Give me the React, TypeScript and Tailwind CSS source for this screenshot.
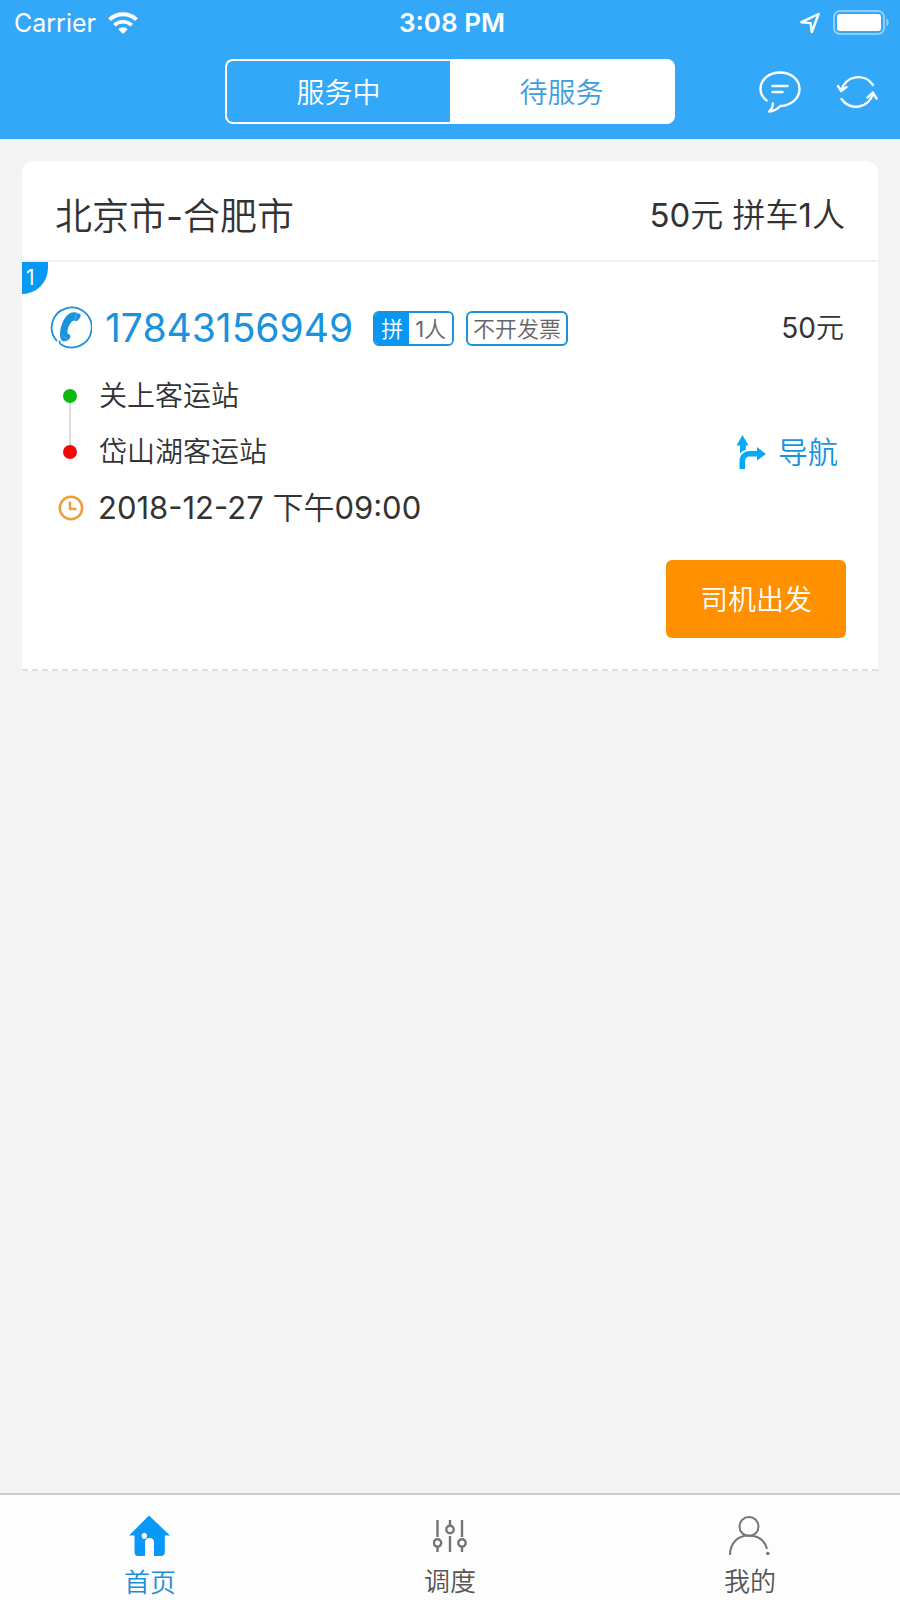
import { useState } from 'react';
import type { ReactNode } from 'react';

function WifiIcon() {
  return (
    <svg viewBox="0 0 30 22" className="h-[22px] w-[30px]" fill="none" stroke="currentColor" strokeWidth="4">
      <path d="M1.5 7.6a19.5 19.5 0 0 1 27 0" />
      <path d="M6.3 13.2a12.7 12.7 0 0 1 17.4 0" strokeWidth="3.6" />
      <path d="M15 22l-4.7-4.8a6.8 6.8 0 0 1 9.4 0z" fill="currentColor" stroke="none" />
    </svg>
  );
}

function LocationIcon() {
  return (
    <svg viewBox="0 0 20 22" className="h-[22px] w-[20px]" fill="none" stroke="currentColor" strokeWidth="2.4" strokeLinejoin="round">
      <path d="M18.600 2L1.400 10.200l9.200.9 1.200 8.900z" />
    </svg>
  );
}

function BatteryIcon() {
  return (
    <svg viewBox="0 0 57 26" className="h-[26px] w-[57px]">
      <rect x="1" y="1" width="50" height="23" rx="6" fill="none" stroke="#fff" strokeOpacity="0.45" strokeWidth="2" />
      <rect x="4" y="4" width="44" height="17" rx="3" fill="#fff" />
      <path d="M53.5 8.5c3 1.5 3 6.5 0 8z" fill="#fff" fillOpacity="0.5" />
    </svg>
  );
}

function MessageIcon() {
  return (
    <svg viewBox="0 0 42 42" className="h-[42px] w-[42px]" fill="none" stroke="currentColor" strokeWidth="2.4" strokeLinecap="round" strokeLinejoin="round">
      <path d="M7.600 29.500C3.800 26.600 1.500 22.800 1.500 18 1.500 8.500 10 1.500 21 1.500S40.500 8.500 40.500 18 32 34.500 21.500 35c-2.500 2.500-6 5.300-11.500 5.500 2.500-1.800 3.800-4.500 3.800-8" />
      <path d="M13.500 15h15M13.500 21h10" />
    </svg>
  );
}

function RefreshIcon() {
  return (
    <svg viewBox="0 0 42 38" className="h-[38px] w-[42px]" fill="none" stroke="currentColor" strokeWidth="2.4" strokeLinecap="round" strokeLinejoin="round">
      <path d="M37 12A17.500 17.500 0 0 0 5.500 17" />
      <path d="M2 13l3.200 5 5.300-4" />
      <path d="M5.500 26A17.500 17.500 0 0 0 37 20.500" />
      <path d="M31.500 24.500l5.300-5 3.700 6" />
    </svg>
  );
}

function PhoneIcon() {
  return (
    <svg viewBox="0 0 42 44" className="h-[44px] w-[42px]">
      <path
        d="M6.500 34.500A20 20 0 1 1 11 38.400Q9.500 37 9.600 35.500"
        fill="none"
        stroke="currentColor"
        strokeWidth="1.8"
        strokeLinecap="round"
      />
      <path
        d="M21.500 6.500C15 8.500 10.300 19 10 28c0 4 1.200 7.200 3.500 7.300 2.500.2 5.300-1 6.500-3.300l.5-2.500-3-2.300c-.5-4 1-8.200 4.500-12l2-.7 3 .8 3.500-4.300V8.300L25.500 6.300z"
        fill="currentColor"
      />
      <path d="M26.500 7l-1.700 7.500M12.500 29.200l5.500 4.800" stroke="#fff" strokeOpacity="0.4" strokeWidth="0.8" />
    </svg>
  );
}

function ClockIcon() {
  return (
    <svg viewBox="0 0 26 26" className="h-[26px] w-[26px]" fill="none" stroke="currentColor" strokeWidth="2.6">
      <circle cx="13" cy="13" r="11.2" />
      <path d="M12 6.500V14h6.500" />
    </svg>
  );
}

function NavigateIcon() {
  return (
    <svg viewBox="0 0 30 34" className="h-[34px] w-[30px]" fill="currentColor">
      <path d="M6.500 0l6 10.500H9.800v4.300C7 15.500 5 17 4 19v-8.500H.5z" />
      <path d="M3.500 34v-7c0-7 4-11 10.500-11h7v-4L30 19l-9 6.500v-4h-7c-3.500 0-5 2-5 5.500v7z" />
    </svg>
  );
}

function HomeIcon() {
  return (
    <svg viewBox="0 0 42 42" className="h-[42px] w-[42px]" fill="currentColor" fillRule="evenodd">
      <path d="M20 .5L41 20.500h-5.200V37q0 4-4 4H25V27.500q0-4.500-4.500-4.500T16 27.500V41h-7q-3.500 0-3.500-4V20.500H0zM15.300 17.700a2.600 3.200 0 1 0 .01 0z" />
    </svg>
  );
}

function SlidersIcon() {
  return (
    <svg viewBox="0 0 34 34" className="h-[34px] w-[34px]" fill="none" stroke="currentColor" strokeWidth="2.4">
      <path d="M4.500 1v17M4.500 28v5M17 1v5M17 17v16M29 1v17M29 28v5" />
      <circle cx="4.500" cy="24" r="3.700" />
      <circle cx="17" cy="10.500" r="3.700" />
      <circle cx="29" cy="24" r="3.700" />
    </svg>
  );
}

function UserIcon() {
  return (
    <svg viewBox="0 0 42 40" className="h-[40px] w-[42px]" fill="none" stroke="currentColor" strokeWidth="2">
      <circle cx="20" cy="10.500" r="9.500" />
      <path d="M1 39C1 27 9 19.500 19.500 19.500c9 0 16 4.500 18.500 13.500" />
      <circle cx="38.800" cy="37.500" r="1.800" fill="currentColor" stroke="none" />
    </svg>
  );
}

interface TabButtonProps {
  icon: ReactNode;
  label: string;
  active: boolean;
  onClick: () => void;
}

function TabButton({ icon, label, active, onClick }: TabButtonProps) {
  return (
    <button
      onClick={onClick}
      className={`flex flex-1 flex-col items-center pt-5 ${active ? 'text-[#0898f5]' : 'text-[#757575]'}`}
    >
      <span className="flex h-[44px] items-center">{icon}</span>
      <span className={`mt-2 text-[26px] leading-[36px] ${active ? 'text-[#1a8fda]' : 'text-[#555]'}`}>{label}</span>
    </button>
  );
}

function OrderCard() {
  return (
    <section className="rounded-t-xl border-b-2 border-dashed border-[#dedede] bg-white text-[#333]">
      <div className="flex h-[101px] items-center justify-between border-b-2 border-[#f0f0f0] px-[33px]">
        <h1 className="pt-3 text-[37px] leading-[48px]">北京市-合肥市</h1>
        <p className="pt-2 text-[33px] leading-[48px]">50元 拼车1人</p>
      </div>

      <div className="relative pt-[42px] pr-8 pb-[31px] pl-7">
        <span className="absolute top-0 left-0 flex h-8 w-[26px] items-center rounded-br-[26px] bg-[#0798f4] pl-1 text-[21px] leading-8 text-white">
          1
        </span>

        <div className="flex h-12 items-center">
          <a href="tel:17843156949" className="flex items-center gap-[13px] text-[39px] leading-[48px] text-[#1a92dc]">
            <PhoneIcon />
            17843156949
          </a>
          <span className="ml-5 flex h-[35px] overflow-hidden rounded-md border-2 border-[#1a92dc] text-[22px] leading-[32px] text-[#666]">
            <span className="bg-[#0798f4] px-1.5 text-white">拼</span>
            <span className="bg-white px-1.5">1人</span>
          </span>
          <span className="ml-3 h-[35px] rounded-md border-2 border-[#1a92dc] px-[5px] text-[22px] leading-[32px] text-[#666]">
            不开发票
          </span>
          <span className="ml-auto pr-[2px] text-[28px]">50元</span>
        </div>

        <div className="mt-4 flex items-end justify-between">
          <div className="flex gap-[22px] pl-[13px]">
            <div className="flex flex-col items-center py-[21px]">
              <i className="h-[14px] w-[14px] rounded-full bg-[#0ab80f]" />
              <i className="w-[2px] flex-1 bg-[#ddd]" />
              <i className="h-[14px] w-[14px] rounded-full bg-[#f30808]" />
            </div>
            <div className="text-[28px] leading-[56px]">
              <p>关上客运站</p>
              <p>岱山湖客运站</p>
            </div>
          </div>
          <a href="#navigate" className="flex items-center gap-3 pr-2 text-[30px] leading-[56px] text-[#1a92dc]">
            <span className="text-[#06a8f8]">
              <NavigateIcon />
            </span>
            导航
          </a>
        </div>

        <div className="flex items-center gap-[14px] pl-2 text-[31px] leading-[56px]">
          <span className="text-[#eda03c]">
            <ClockIcon />
          </span>
          <time>2018-12-27 下午09:00</time>
        </div>

        <div className="mt-6 flex justify-end">
          <button className="h-[78px] rounded-md bg-[#ff9000] px-[34px] pt-0.5 text-[28px] text-white">司机出发</button>
        </div>
      </div>
    </section>
  );
}

export default function App() {
  const [service, setService] = useState('waiting');
  const [tab, setTab] = useState('home');

  return (
    <div className="flex min-h-screen flex-col bg-[#f3f3f3] font-[Inter,'Noto_Sans_CJK_SC_DemiLight','Noto_Sans_CJK_SC',sans-serif]">
      <header className="bg-[#33a8f8] pb-[15px] text-white">
        <div className="grid h-[46px] grid-cols-3 items-center pr-[10px] pl-[14px] text-[25px] leading-8">
          <div className="flex items-center gap-3">
            <span>Carrier</span>
            <WifiIcon />
          </div>
          <div className="text-center text-[26px] font-semibold">3:08 PM</div>
          <div className="flex items-center justify-end gap-[13px]">
            <LocationIcon />
            <BatteryIcon />
          </div>
        </div>

        <div className="mt-[13px] grid grid-cols-4 items-center">
          <div className="col-span-2 col-start-2 flex h-[65px] text-[28px]">
            <button
              onClick={() => setService('active')}
              className={`flex-1 rounded-l-lg border-2 border-r-0 border-white pt-0.5 ${service === 'active' ? 'bg-white text-[#3d9ede]' : ''}`}
            >
              服务中
            </button>
            <button
              onClick={() => setService('waiting')}
              className={`flex-1 rounded-r-lg border-2 border-l-0 border-white pt-0.5 ${service === 'waiting' ? 'bg-white text-[#3d9ede]' : ''}`}
            >
              待服务
            </button>
          </div>
          <div className="flex items-center justify-end gap-[35px] pr-[22px]">
            <button aria-label="消息">
              <MessageIcon />
            </button>
            <button aria-label="刷新">
              <RefreshIcon />
            </button>
          </div>
        </div>
      </header>

      <main className="flex-1 px-[22px] pt-[22px]">
        <OrderCard />
      </main>

      <nav className="flex h-[107px] border-t-2 border-[#cacaca] bg-[#fdfdfd]">
        <TabButton icon={<HomeIcon />} label="首页" active={tab === 'home'} onClick={() => setTab('home')} />
        <TabButton icon={<SlidersIcon />} label="调度" active={tab === 'dispatch'} onClick={() => setTab('dispatch')} />
        <TabButton icon={<UserIcon />} label="我的" active={tab === 'mine'} onClick={() => setTab('mine')} />
      </nav>
    </div>
  );
}
